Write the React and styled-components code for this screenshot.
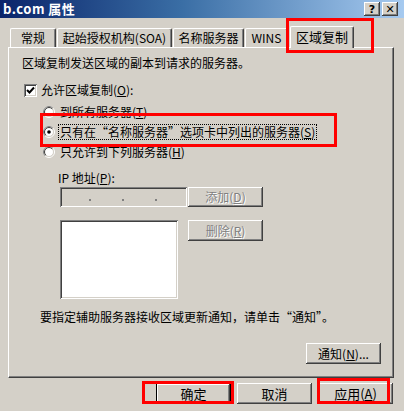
import React from 'react'
import styled, { createGlobalStyle } from 'styled-components'

const Global = createGlobalStyle`
  html, body { margin: 0; padding: 0; background: #d4d0c8; }
  body { font-family: "Noto Sans CJK SC", "Liberation Sans", sans-serif; font-size: 12px; color: #000; }
`

const Window = styled.div`
  position: relative;
  width: 404px;
  height: 411px;
  background: #d4d0c8;
  display: flex;
  flex-direction: column;
  overflow: hidden;
`

const TitleBar = styled.div`
  height: 18px;
  display: flex;
  align-items: center;
  padding: 0 6px 0 3px;
  background: linear-gradient(to right, #0a246a 0%, #3a6ea5 45%, #a6caf0 100%);
  color: #fff;
  font-weight: 700;
  font-size: 13px;
  line-height: 14px;
`

const TitleText = styled.div`
  flex: 1;
  letter-spacing: 0.5px;
`

const CaptionBtn = styled.div`
  width: 16px;
  height: 14px;
  margin-left: ${p => p.gap || 0}px;
  background: #d4d0c8;
  box-shadow: inset -1px -1px #404040, inset 1px 1px #fff, inset -2px -2px #808080;
  display: flex;
  align-items: center;
  justify-content: center;
  color: #000;
  font-family: "DejaVu Sans", sans-serif;
  font-size: 11px;
  font-weight: 700;
  line-height: 1;
`

const Body = styled.div`
  flex: 1;
  display: flex;
  flex-direction: column;
  padding: 8px 10px 0 8px;
`

const TabRow = styled.div`
  display: flex;
  align-items: flex-start;
  height: 21px;
  padding-left: 2px;
  gap: 1px;
  position: relative;
  z-index: 2;
`

const Tab = styled.div`
  width: ${p => p.w}px;
  height: ${p => (p.active ? 22 : 19)}px;
  margin-top: ${p => (p.active ? 0 : 2)}px;
  margin-left: ${p => (p.active ? 1 : 0)}px;
  background: #d4d0c8;
  border-top: 1px solid #fff;
  border-left: 1px solid #fff;
  border-right: 1px solid #404040;
  border-radius: 2px 2px 0 0;
  box-shadow: inset -1px 0 #808080;
  box-sizing: border-box;
  display: flex;
  justify-content: center;
  padding-top: ${p => (p.active ? 3 : 2)}px;
  font-size: ${p => (p.active ? 13 : 12)}px;
  line-height: 14px;
  white-space: nowrap;
`

const Panel = styled.div`
  position: relative;
  z-index: 1;
  height: 331px;
  box-sizing: border-box;
  border-top: 1px solid #fff;
  border-left: 1px solid #fff;
  border-right: 1px solid #404040;
  border-bottom: 1px solid #404040;
  box-shadow: inset -1px -1px #808080;
  display: flex;
  flex-direction: column;
  padding: 8px 0 0 13px;
`

const Line = styled.div`
  line-height: 14px;
  height: 14px;
  margin-top: ${p => p.top || 0}px;
  margin-left: ${p => p.indent || 0}px;
  white-space: nowrap;
  display: flex;
  align-items: center;
`

const CheckBox = styled.span`
  width: 13px;
  height: 13px;
  box-sizing: border-box;
  background: #fff;
  box-shadow: inset 1px 1px #808080, inset -1px -1px #fff, inset 2px 2px #404040, inset -2px -2px #d4d0c8;
  margin-right: 4px;
  display: inline-flex;
  align-items: center;
  justify-content: center;
`

const RadioGroup = styled.div`
  display: flex;
  flex-direction: column;
  margin-top: 5px;
  margin-left: 21px;
`

const RadioRow = styled.div`
  height: 20px;
  display: flex;
  align-items: center;
  white-space: nowrap;
  line-height: 14px;
`

const RadioLabel = styled.span`
  margin-left: 3px;
  padding: 0 1px;
  border: 1px dotted ${p => (p.focus ? '#000' : 'transparent')};
`

const FieldRow = styled.div`
  display: flex;
  align-items: flex-start;
  gap: ${p => p.gap || 1}px;
  margin-top: ${p => p.top || 0}px;
  margin-left: 38px;
`

const Sunken = styled.div`
  width: ${p => p.w}px;
  height: ${p => p.h}px;
  box-sizing: border-box;
  background: ${p => (p.disabled ? '#d4d0c8' : '#fff')};
  box-shadow: inset 1px 1px #808080, inset -1px -1px #fff, inset 2px 2px #404040, inset -2px -2px #d4d0c8;
`

const IpField = styled(Sunken)`
  display: flex;
  align-items: flex-end;
  padding: 0 0 6px 29px;
  gap: 31px;
`

const Dot = styled.span`
  width: 2px;
  height: 2px;
  background: #808080;
`

const Button = styled.div`
  width: ${p => p.w || 75}px;
  height: ${p => p.h || 21}px;
  box-sizing: border-box;
  background: #d4d0c8;
  box-shadow: ${p =>
    p.primary
      ? 'inset 0 0 0 1px #000, inset -2px -2px #404040, inset 2px 2px #fff, inset -3px -3px #808080'
      : 'inset -1px -1px #404040, inset 1px 1px #fff, inset -2px -2px #808080'};
  display: flex;
  align-items: center;
  justify-content: center;
  white-space: nowrap;
  line-height: 14px;
  font-size: ${p => p.fs || 12}px;
  color: ${p => (p.disabled ? '#808080' : '#000')};
  text-shadow: ${p => (p.disabled ? '1px 1px #fff' : 'none')};
`

const NotifyButton = styled(Button)`
  align-self: flex-end;
  margin-top: 19px;
  margin-right: 12px;
`

const Footer = styled.div`
  display: flex;
  justify-content: flex-end;
  gap: 6px;
  margin-top: 5px;
  padding-right: 1px;
`

const Mark = styled.div`
  position: absolute;
  left: ${p => p.x}px;
  top: ${p => p.y}px;
  width: ${p => p.w}px;
  height: ${p => p.h}px;
  box-sizing: border-box;
  border: 3px solid #ff0000;
  pointer-events: none;
  z-index: 10;
`

function Radio({ checked }) {
  return (
    <svg width="12" height="12" viewBox="0 0 12 12">
      <circle cx="6" cy="6" r="5.5" fill="none" stroke="#fff" />
      <path d="M2.1 9.9 A5.5 5.5 0 0 1 9.9 2.1" fill="none" stroke="#808080" />
      <circle cx="6" cy="6" r="4.5" fill="#fff" stroke="#d4d0c8" />
      <path d="M2.8 9.2 A4.5 4.5 0 0 1 9.2 2.8" fill="none" stroke="#404040" />
      {checked && <circle cx="6" cy="6" r="1.8" fill="#000" />}
    </svg>
  )
}

export default function App() {
  return (
    <Window>
      <Global />
      <TitleBar>
        <TitleText>b.com 属性</TitleText>
        <CaptionBtn>?</CaptionBtn>
        <CaptionBtn gap={2}>✕</CaptionBtn>
      </TitleBar>
      <Body>
        <TabRow>
          <Tab w={46}>常规</Tab>
          <Tab w={115}>起始授权机构(SOA)</Tab>
          <Tab w={71}>名称服务器</Tab>
          <Tab w={43}>WINS</Tab>
          <Tab w={64} active>区域复制</Tab>
        </TabRow>
        <Panel>
          <Line>区域复制发送区域的副本到请求的服务器。</Line>
          <Line top={13} indent={2}>
            <CheckBox>
              <svg width="9" height="9" viewBox="0 0 9 9">
                <path d="M1 4 L3.5 6.5 L8 1.5" fill="none" stroke="#000" strokeWidth="2" />
              </svg>
            </CheckBox>
            允许区域复制(<u>O</u>):
          </Line>
          <RadioGroup>
            <RadioRow><Radio /><RadioLabel>到所有服务器(<u>T</u>)</RadioLabel></RadioRow>
            <RadioRow><Radio checked /><RadioLabel focus>只有在“名称服务器”选项卡中列出的服务器(<u>S</u>)</RadioLabel></RadioRow>
            <RadioRow><Radio /><RadioLabel>只允许到下列服务器(<u>H</u>)</RadioLabel></RadioRow>
          </RadioGroup>
          <Line top={9} indent={36}>IP 地址(<u>P</u>):</Line>
          <FieldRow top={2}>
            <IpField w={127} h={20} disabled>
              <Dot /><Dot /><Dot />
            </IpField>
            <Button disabled h={20}>添加(<u>D</u>)</Button>
          </FieldRow>
          <FieldRow top={13} gap={10}>
            <Sunken w={118} h={79} />
            <Button disabled>删除(<u>R</u>)</Button>
          </FieldRow>
          <Line top={11} indent={18}>要指定辅助服务器接收区域更新通知，请单击“通知”。</Line>
          <NotifyButton>通知(<u>N</u>)...</NotifyButton>
        </Panel>
        <Footer>
          <Button primary h={21} fs={13}>确定</Button>
          <Button fs={13}>取消</Button>
          <Button fs={13}>应用(<u>A</u>)</Button>
        </Footer>
      </Body>
      <Mark x={286} y={18} w={88} h={35} />
      <Mark x={40} y={113} w={297} h={34} />
      <Mark x={142} y={381} w={92} h={23} />
      <Mark x={317} y={378} w={73} h={26} />
    </Window>
  )
}
